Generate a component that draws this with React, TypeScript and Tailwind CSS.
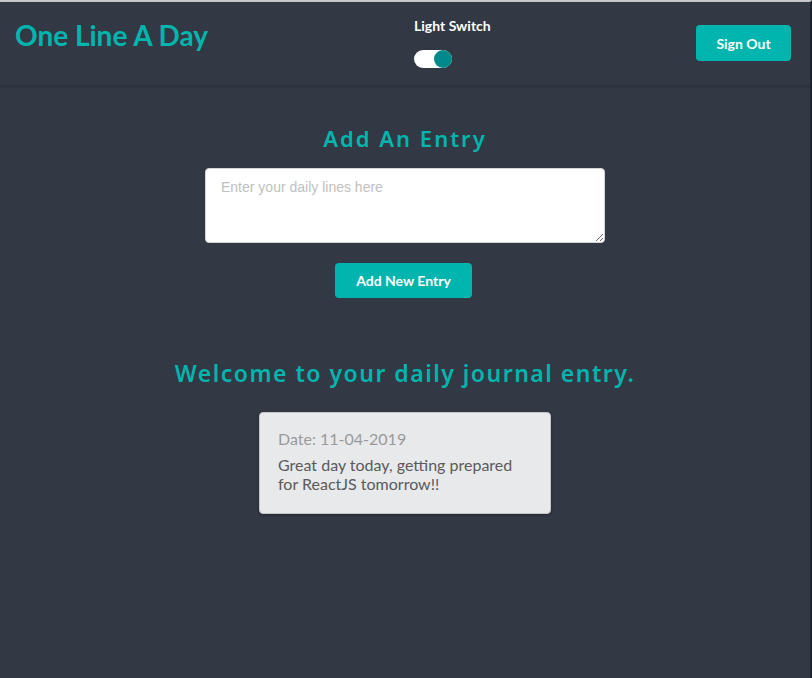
export default function App() {
  return (
    <div className="min-h-[678px] w-[812px] bg-[#323844] border-t-2 border-t-[#c8c8c8] border-r-2 border-r-[#1f2530] font-['Lato',sans-serif]">
      <header className="flex h-[84px] items-start border-b border-b-[#2b303a] pl-[15px] pr-[19px] shadow-[0_1px_2px_rgba(0,0,0,0.15)]">
        <h1 className="mt-[15px] w-[399px] text-[28px] font-bold leading-[36px] text-[#00b5ad]">
          One Line A Day
        </h1>
        <div className="mt-[15px] flex flex-col items-start">
          <span className="text-[14px] font-bold leading-[18px] text-white">Light Switch</span>
          <div className="mt-[15px] flex h-[18px] w-[38px] items-center justify-end rounded-full bg-white">
            <div className="h-[18px] w-[18px] rounded-full bg-[#00898a]" />
          </div>
        </div>
        <button className="ml-auto mt-[23px] h-[36px] w-[95px] rounded-[4px] bg-[#00b5ad] text-[14px] font-bold text-white">
          Sign Out
        </button>
      </header>

      <main className="flex flex-col items-center pt-[37px]">
        <h2 className="font-['Noto_Sans',sans-serif] text-[22px] font-semibold leading-[30px] tracking-[2px] text-[#00b5ad]">
          Add An Entry
        </h2>
        <textarea
          className="mt-[15px] h-[75px] w-[400px] rounded-[4px] border border-[#d4d4d5] bg-white px-[15px] pt-[8px] font-['Liberation_Sans',sans-serif] text-[14px] text-[#333] outline-none placeholder:text-[#bfbfbf]"
          placeholder="Enter your daily lines here"
        />
        <button className="mr-[3px] mt-[20px] h-[35px] w-[137px] rounded-[4px] bg-[#00b5ad] text-[14px] font-bold text-white">
          Add New Entry
        </button>

        <h2 className="mt-[60px] font-['Noto_Sans',sans-serif] text-[23px] font-semibold leading-[30px] tracking-[1.5px] text-[#00b5ad]">
          Welcome to your daily journal entry.
        </h2>
        <div className="mt-[24px] w-[292px] rounded-[4px] border border-[#c4c5c7] bg-[#e8e9eb] px-[18px] pb-[20px] pt-[15px] shadow-[0_1px_3px_rgba(0,0,0,0.3)]">
          <p className="text-[16px] leading-[22px] text-[#9a9a9a]">Date: 11-04-2019</p>
          <p className="mt-[5px] text-[16px] leading-[19px] text-[#5a5a5a]">
            Great day today, getting prepared for ReactJS tomorrow!!
          </p>
        </div>
      </main>
    </div>
  );
}
